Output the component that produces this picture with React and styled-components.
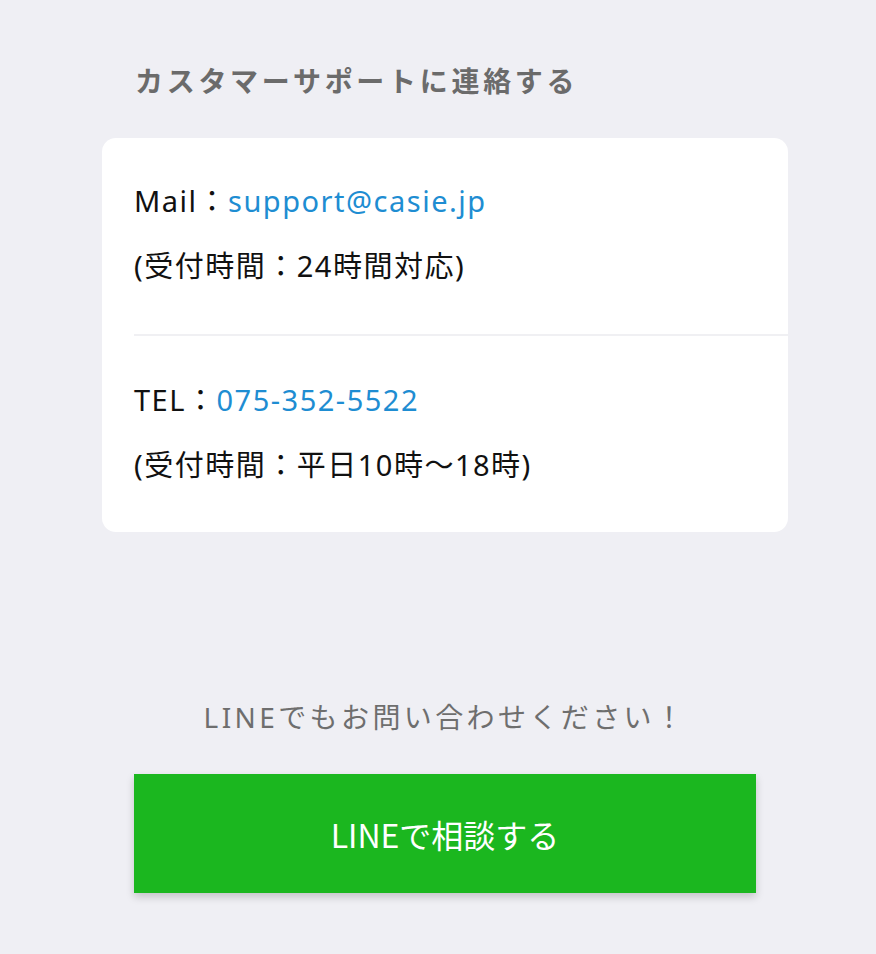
import React from "react";
import styled, { createGlobalStyle } from "styled-components";

const GlobalStyle = createGlobalStyle`
  html, body {
    margin: 0;
    padding: 0;
    background: #efeff4;
  }
  body {
    font-family: "Noto Sans", "Noto Sans CJK JP", sans-serif;
  }
`;

const Page = styled.div`
  min-height: 954px;
  background: #efeff4;
  padding: 58px 0 0 102px;
  box-sizing: border-box;
`;

const Column = styled.div`
  width: 686px;
  display: flex;
  flex-direction: column;
`;

const Title = styled.h2`
  margin: 0 0 36px 33px;
  font-family: "Noto Sans CJK JP", sans-serif;
  font-size: 28px;
  line-height: 44px;
  font-weight: 700;
  color: #6b6b6b;
  letter-spacing: 3.7px;
`;

const Card = styled.div`
  background: #ffffff;
  border-radius: 14px;
  overflow: hidden;
`;

const Section = styled.div`
  display: flex;
  flex-direction: column;
  gap: 25px;
  padding: ${(p) => (p.$divided ? "44px 32px 47px 0" : "43px 32px 48px")};
  margin-left: ${(p) => (p.$divided ? "32px" : "0")};
  border-top: ${(p) => (p.$divided ? "2px solid #f0f0f3" : "none")};
`;

const Line = styled.p`
  margin: 0;
  font-size: 29px;
  line-height: 40px;
  letter-spacing: 1.5px;
  color: #111;
`;

const Link = styled.a`
  color: #1e8dd2;
  text-decoration: none;
`;

const Note = styled.p`
  margin: 165px 0 0;
  text-align: center;
  font-size: 28px;
  line-height: 40px;
  color: #6e6e6e;
  letter-spacing: 3.4px;
`;

const LineButton = styled.button`
  margin: 37px 0 0 32px;
  width: 622px;
  height: 119px;
  border: none;
  background: #1bb71f;
  color: #ffffff;
  font-family: "Noto Sans CJK JP", sans-serif;
  font-size: 32px;
  box-shadow: 0 4px 8px rgba(0, 0, 0, 0.18);
  cursor: pointer;
`;

export default function App() {
  return (
    <>
      <GlobalStyle />
      <Page>
        <Column>
          <Title>カスタマーサポートに連絡する</Title>
          <Card>
            <Section>
              <Line>
                Mail：<Link href="#">support@casie.jp</Link>
              </Line>
              <Line>(受付時間：24時間対応)</Line>
            </Section>
            <Section $divided>
              <Line>
                TEL：<Link href="#">075-352-5522</Link>
              </Line>
              <Line>(受付時間：平日10時〜18時)</Line>
            </Section>
          </Card>
          <Note>LINEでもお問い合わせください！</Note>
          <LineButton>LINEで相談する</LineButton>
        </Column>
      </Page>
    </>
  );
}
